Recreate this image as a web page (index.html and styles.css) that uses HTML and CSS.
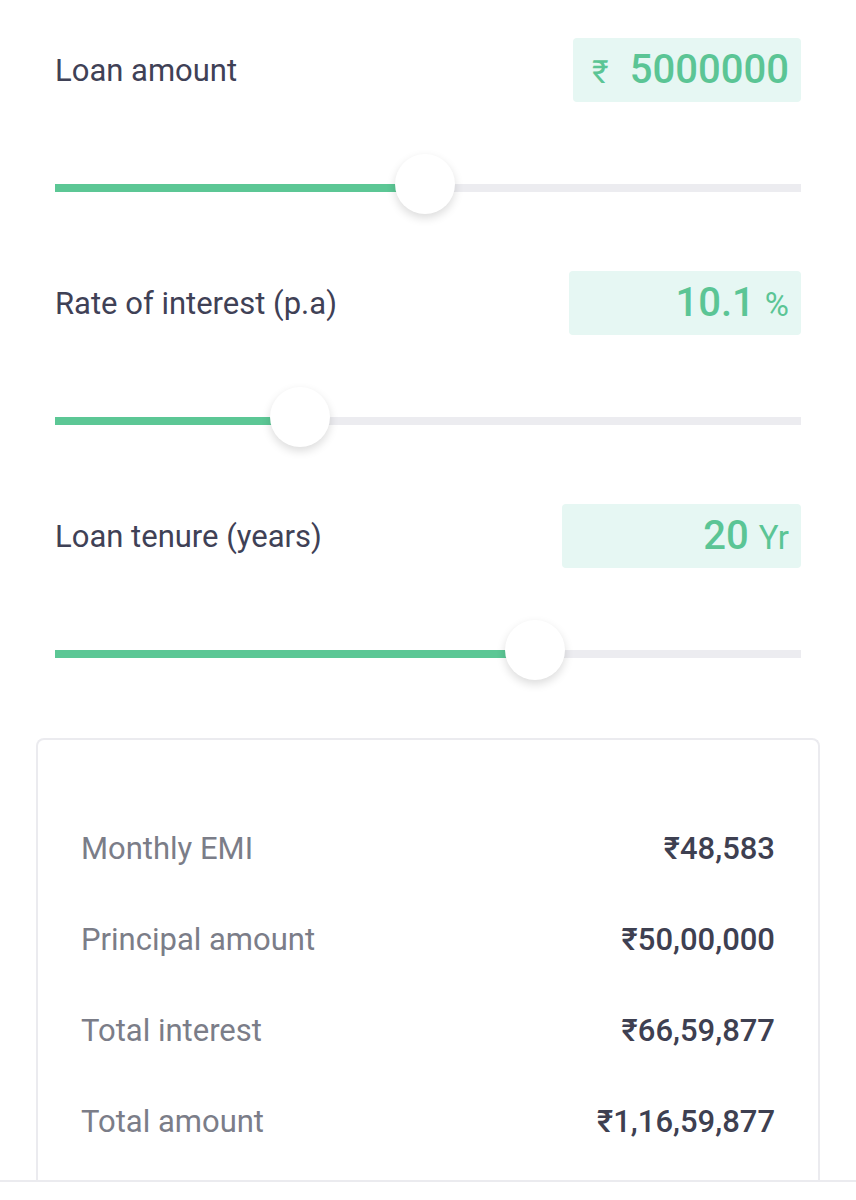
FILE: index.html
```html
<!DOCTYPE html>
<html lang="en">
<head>
  <meta charset="UTF-8" />
  <meta name="viewport" content="width=device-width, initial-scale=1.0"/>
  <title>EMI Calculator</title>
  <link rel="stylesheet" href="styles.css">
</head>
<body>
  <main class="calc">
    <section class="field">
      <div class="field-head">
        <span class="field-label">Loan amount</span>
        <div class="value-box box-amount"><span class="unit unit-pre">₹</span><span class="num">5000000</span></div>
      </div>
      <div class="slider">
        <div class="track"><div class="fill" style="width: 49.6%"></div></div>
        <div class="thumb" style="left: 49.6%"></div>
      </div>
    </section>

    <section class="field">
      <div class="field-head">
        <span class="field-label">Rate of interest (p.a)</span>
        <div class="value-box box-rate"><span class="num">10.1</span><span class="unit">%</span></div>
      </div>
      <div class="slider">
        <div class="track"><div class="fill" style="width: 32.8%"></div></div>
        <div class="thumb" style="left: 32.8%"></div>
      </div>
    </section>

    <section class="field">
      <div class="field-head">
        <span class="field-label">Loan tenure (years)</span>
        <div class="value-box box-tenure"><span class="num">20</span><span class="unit">Yr</span></div>
      </div>
      <div class="slider">
        <div class="track"><div class="fill" style="width: 64.3%"></div></div>
        <div class="thumb" style="left: 64.3%"></div>
      </div>
    </section>
  </main>

  <section class="summary">
    <div class="summary-row"><span class="s-label">Monthly EMI</span><span class="s-value">₹48,583</span></div>
    <div class="summary-row"><span class="s-label">Principal amount</span><span class="s-value">₹50,00,000</span></div>
    <div class="summary-row"><span class="s-label">Total interest</span><span class="s-value">₹66,59,877</span></div>
    <div class="summary-row"><span class="s-label">Total amount</span><span class="s-value">₹1,16,59,877</span></div>
  </section>

  <footer class="bottom-bar"></footer>
</body>
</html>
```

FILE: styles.css
```css
body {
  margin: 0;
  font-family: Roboto, "Noto Sans", sans-serif;
  background: #fff;
  color: #3f4156;
  overflow: hidden;
}
.calc {
  padding: 38px 55px 0;
}
.field {
  margin-bottom: 57px;
}
.field:last-child {
  margin-bottom: 58px;
}
.field-head {
  display: flex;
  justify-content: space-between;
  align-items: center;
  height: 64px;
}
.field-label {
  font-size: 31px;
  color: #3f4156;
}
.value-box {
  box-sizing: border-box;
  display: flex;
  align-items: baseline;
  justify-content: flex-end;
  gap: 10px;
  height: 64px;
  line-height: 64px;
  padding: 0 12px 0 19px;
  background: #e6f7f3;
  border-radius: 4px;
  color: #5bc595;
}
.box-amount {
  width: 228px;
  justify-content: space-between;
}
.box-rate {
  width: 232px;
}
.box-tenure {
  width: 239px;
}
.value-box .num {
  font-size: 40px;
  font-weight: 500;
}
.value-box .unit {
  font-size: 33px;
}
.value-box .unit-pre {
  font-size: 32px;
}
.slider {
  position: relative;
  height: 60px;
  margin-top: 52px;
}
.track {
  position: absolute;
  top: 30px;
  left: 0;
  right: 0;
  height: 8px;
  background: #ececf0;
}
.fill {
  height: 100%;
  background: #5cc795;
}
.thumb {
  position: absolute;
  top: 0;
  width: 60px;
  height: 60px;
  margin-left: -30px;
  border-radius: 50%;
  background: #fff;
  box-shadow: 0 4px 10px rgba(0, 0, 0, 0.14);
}
.summary {
  margin: 0 36px;
  padding: 63px 43px 13px 43px;
  border: 2px solid #ebebef;
  border-bottom: none;
  border-radius: 8px 8px 0 0;
}
.summary-row {
  display: flex;
  justify-content: space-between;
  align-items: center;
  height: 91px;
  font-size: 31px;
}
.s-label {
  color: #7b7d88;
}
.s-value {
  color: #3e4051;
  font-weight: 500;
}
.bottom-bar {
  height: 20px;
  border-top: 2px solid #ebebef;
}
```
